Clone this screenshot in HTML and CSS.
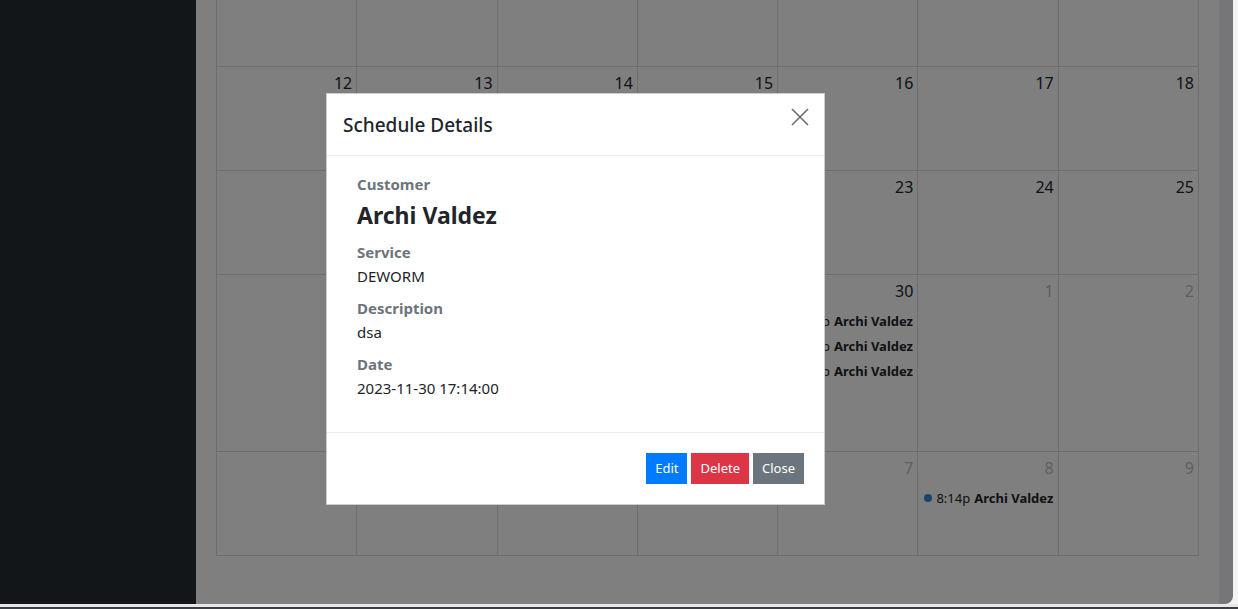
FILE: index.html
```html
<!DOCTYPE html>
<html lang="en">
<head>
<meta charset="utf-8">
<title>Schedule</title>
<link rel="stylesheet" href="styles.css">
</head>
<body>
<div class="screen">
  <div class="window">
    <aside class="sidebar"></aside>
    <main class="main">
      <div class="calendar">
        <div class="week">
          <div class="day"><div class="num">5</div></div>
          <div class="day"><div class="num">6</div></div>
          <div class="day"><div class="num">7</div></div>
          <div class="day"><div class="num">8</div></div>
          <div class="day"><div class="num">9</div></div>
          <div class="day"><div class="num">10</div></div>
          <div class="day"><div class="num">11</div></div>
        </div>
        <div class="week">
          <div class="day"><div class="num">12</div></div>
          <div class="day"><div class="num">13</div></div>
          <div class="day"><div class="num">14</div></div>
          <div class="day"><div class="num">15</div></div>
          <div class="day"><div class="num">16</div></div>
          <div class="day"><div class="num">17</div></div>
          <div class="day"><div class="num">18</div></div>
        </div>
        <div class="week">
          <div class="day"><div class="num">19</div></div>
          <div class="day"><div class="num">20</div></div>
          <div class="day"><div class="num">21</div></div>
          <div class="day"><div class="num">22</div></div>
          <div class="day"><div class="num">23</div></div>
          <div class="day"><div class="num">24</div></div>
          <div class="day"><div class="num">25</div></div>
        </div>
        <div class="week tall">
          <div class="day"><div class="num">26</div></div>
          <div class="day"><div class="num">27</div></div>
          <div class="day"><div class="num">28</div></div>
          <div class="day"><div class="num">29</div></div>
          <div class="day">
            <div class="num">30</div>
            <div class="event"><span class="dot"></span><span class="time">5:14p</span><span class="title">Archi Valdez</span></div>
            <div class="event"><span class="dot"></span><span class="time">5:14p</span><span class="title">Archi Valdez</span></div>
            <div class="event"><span class="dot"></span><span class="time">5:14p</span><span class="title">Archi Valdez</span></div>
          </div>
          <div class="day other"><div class="num">1</div></div>
          <div class="day other"><div class="num">2</div></div>
        </div>
        <div class="week">
          <div class="day other"><div class="num">3</div></div>
          <div class="day other"><div class="num">4</div></div>
          <div class="day other"><div class="num">5</div></div>
          <div class="day other"><div class="num">6</div></div>
          <div class="day other"><div class="num">7</div></div>
          <div class="day other">
            <div class="num">8</div>
            <div class="event"><span class="dot"></span><span class="time">8:14p</span><span class="title">Archi Valdez</span></div>
          </div>
          <div class="day other"><div class="num">9</div></div>
        </div>
      </div>
    </main>
    <div class="scrollbar"></div>
    <div class="backdrop"></div>
    <div class="modal">
      <div class="modal-header">
        <h5 class="modal-title">Schedule Details</h5>
        <button class="close" aria-label="Close">
          <svg width="18" height="18" viewBox="0 0 18 18"><path d="M1 1L17 17M17 1L1 17" stroke="#6c6c6c" stroke-width="1.6" fill="none"/></svg>
        </button>
      </div>
      <div class="modal-body">
        <div class="field">
          <div class="label">Customer</div>
          <div class="name">Archi Valdez</div>
        </div>
        <div class="field">
          <div class="label">Service</div>
          <div class="value">DEWORM</div>
        </div>
        <div class="field">
          <div class="label">Description</div>
          <div class="value">dsa</div>
        </div>
        <div class="field last">
          <div class="label">Date</div>
          <div class="value">2023-11-30 17:14:00</div>
        </div>
      </div>
      <div class="modal-footer">
        <button class="btn btn-edit">Edit</button>
        <button class="btn btn-delete">Delete</button>
        <button class="btn btn-close">Close</button>
      </div>
    </div>
  </div>
  <div class="bottom-light"></div>
  <div class="bottom-dark"></div>
</div>
</body>
</html>
```

FILE: styles.css
```css
* { box-sizing: border-box; }
html, body {
  margin: 0;
  padding: 0;
  height: 609px;
  overflow: hidden;
  background: #f3f3f3;
  font-family: "Noto Sans", "Open Sans", sans-serif;
  color: #212529;
}
.screen {
  display: flex;
  flex-direction: column;
  width: 1238px;
  height: 609px;
}
.window {
  position: relative;
  display: flex;
  width: 1233px;
  height: 604px;
  flex: none;
  overflow: hidden;
  border-bottom-right-radius: 8px;
  background: #fff;
}
.sidebar {
  width: 196px;
  flex: none;
  background: #252c33;
}
.main {
  flex: 1;
  padding: 0 20px;
  background: #fff;
  overflow: hidden;
}
.scrollbar {
  width: 14px;
  flex: none;
  background: #ececf0;
}
.calendar {
  margin-top: -38px;
  border-left: 1px solid #ddd;
  border-top: 1px solid #ddd;
}
.week {
  display: grid;
  grid-template-columns: repeat(7, 1fr);
  height: 104px;
}
.week.tall { height: 177px; }
.day {
  border-right: 1px solid #ddd;
  border-bottom: 1px solid #ddd;
  display: flex;
  flex-direction: column;
  min-width: 0;
}
.num {
  text-align: right;
  padding: 4px 4px 4px 4px;
  font-size: 16px;
  line-height: 24px;
  color: #212529;
}
.day.other .num { opacity: 0.3; }
.event {
  display: flex;
  align-items: center;
  margin: 1px 2px 0;
  height: 24px;
  font-size: 13px;
  white-space: nowrap;
  color: #212529;
}
.num + .event { margin-top: 2px; }
.dot {
  width: 8px;
  height: 8px;
  border-radius: 50%;
  background: #3788d8;
  margin: 0 4px;
  flex: none;
}
.time { margin-right: 4px; }
.title { font-weight: 700; }
.backdrop {
  position: absolute;
  inset: 0;
  background: rgba(0, 0, 0, 0.5);
}
.modal {
  position: absolute;
  left: 326px;
  top: 93px;
  width: 499px;
  background: #fff;
  border: 1px solid rgba(0, 0, 0, 0.2);
  display: flex;
  flex-direction: column;
}
.modal-header {
  display: flex;
  align-items: flex-start;
  justify-content: space-between;
  padding: 16px;
  border-bottom: 1px solid #e9ecef;
  height: 62px;
}
.modal-title {
  margin: 0;
  font-size: 19px;
  font-weight: 500;
  line-height: 30px;
}
.close {
  border: 0;
  background: none;
  padding: 0;
  margin: -2px -1px 0 0;
  width: 18px;
  height: 18px;
  display: flex;
}
.modal-body {
  padding: 16px 30px;
}
.field { margin-bottom: 8px; }
.field.last { margin-bottom: 16px; }
.label {
  font-size: 15px;
  font-weight: 700;
  line-height: 24px;
  color: #6c757d;
}
.name {
  font-size: 23px;
  font-weight: 700;
  line-height: 30px;
  margin: 4px 0 10px;
}
.value {
  font-size: 15px;
  line-height: 24px;
}
.modal-footer {
  display: flex;
  justify-content: flex-end;
  gap: 4px;
  padding: 20px 20px 20px;
  border-top: 1px solid #e9ecef;
}
.btn {
  border: 0;
  border-radius: 0;
  color: #fff;
  font-family: inherit;
  font-size: 13px;
  line-height: 21px;
  padding: 5px 9px;
  height: 31px;
}
.btn-edit { background: #007bff; }
.btn-delete { background: #dc3545; }
.btn-close { background: #6c757d; }
.bottom-light {
  height: 3px;
  background: #e6e6e6;
}
.bottom-dark {
  height: 2px;
  background: #3a3f45;
}
```
